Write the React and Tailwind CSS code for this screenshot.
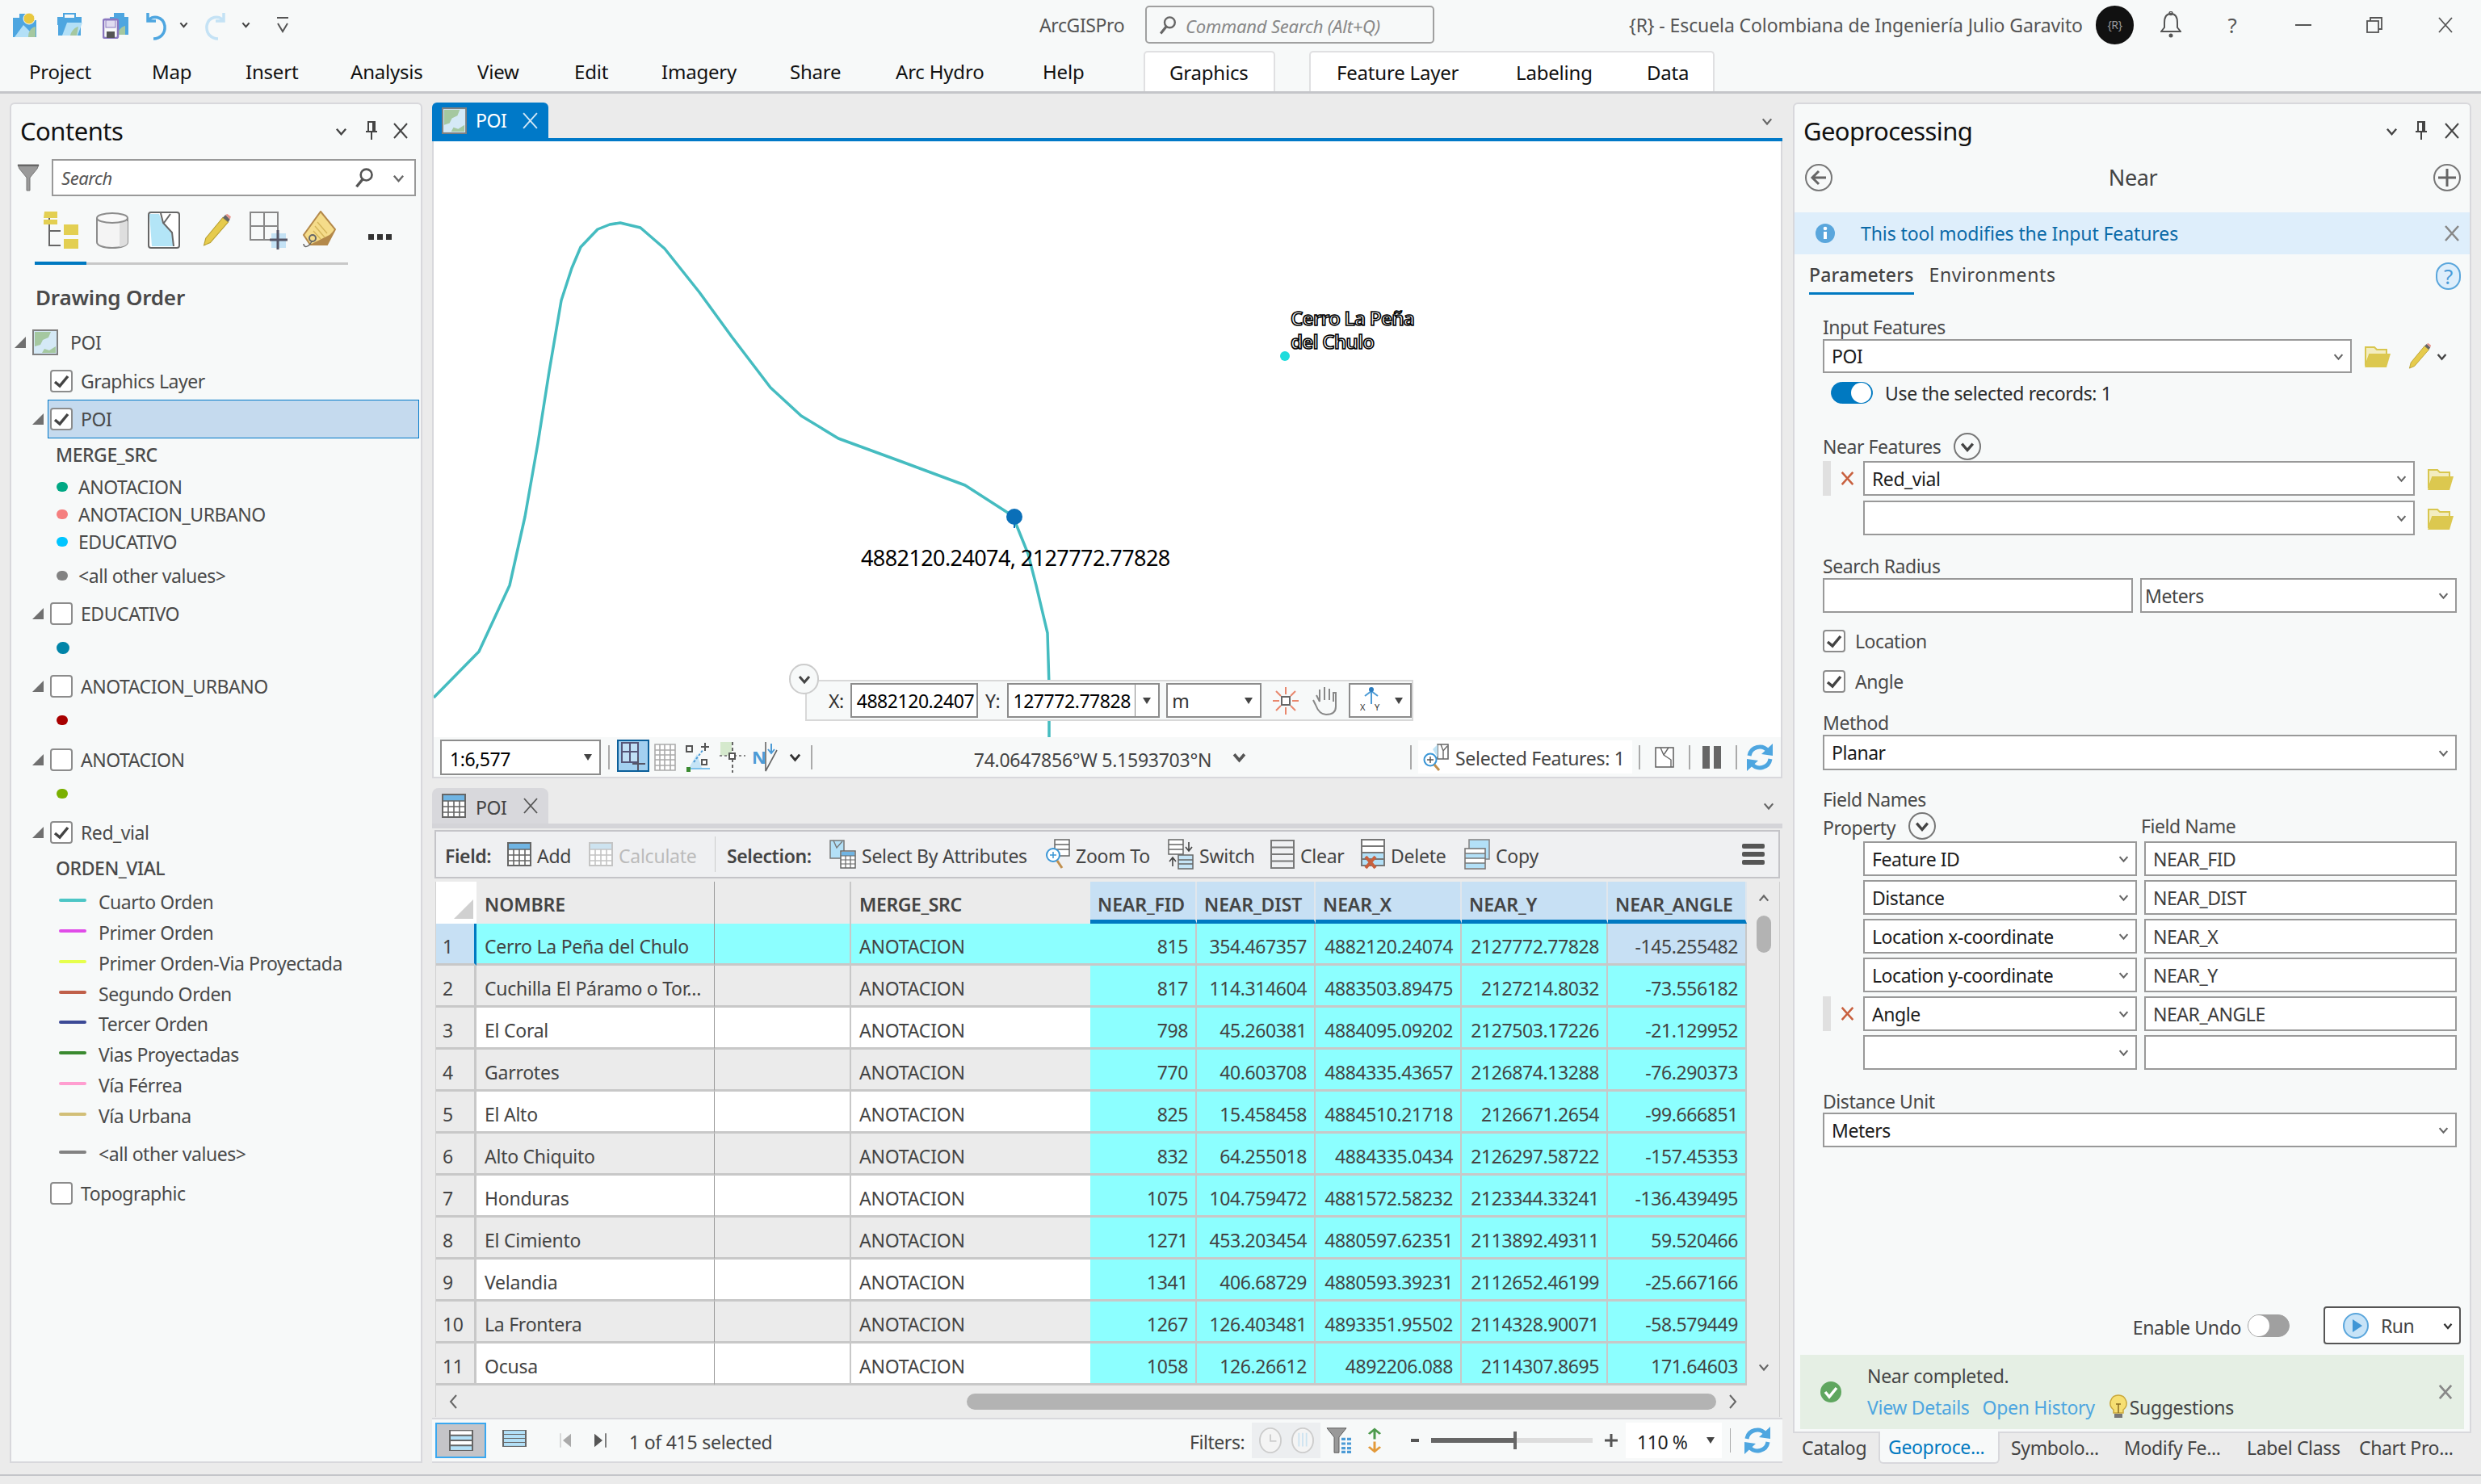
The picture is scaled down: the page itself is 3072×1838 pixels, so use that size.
import React from 'react';

const Chev = ({ s = 16, c = '#555', w = 2.5, up = false }) => (
  <svg width={s} height={s} viewBox="0 0 16 16" className="shrink-0">
    <polyline points={up ? '2,11 8,4 14,11' : '2,5 8,12 14,5'} fill="none" stroke={c} strokeWidth={w} />
  </svg>
);
const Xi = ({ s = 20, c = '#444', w = 2 }) => (
  <svg width={s} height={s} viewBox="0 0 20 20" className="shrink-0">
    <path d="M2 1 L18 19 M18 1 L2 19" stroke={c} strokeWidth={w} fill="none" />
  </svg>
);
const Pin = () => (
  <svg width="16" height="24" viewBox="0 0 16 24" className="shrink-0">
    <path d="M4 1h8v12H4zM1 13h14M8 13v10M10 2v11" stroke="#444" strokeWidth="2" fill="none" />
  </svg>
);
const Drop = ({ c = '#444' }) => (
  <svg width="12" height="10" viewBox="0 0 12 10" className="shrink-0"><polygon points="1,1 11,1 6,9" fill={c} /></svg>
);
const Lens = ({ s = 30, c = '#555' }) => (
  <svg width={s} height={s} viewBox="0 0 30 30" className="shrink-0">
    <circle cx="18" cy="11" r="8" stroke={c} strokeWidth="3" fill="none" />
    <path d="M13 17 L4 28" stroke={c} strokeWidth="4" />
  </svg>
);
const Folder = () => (
  <svg width="34" height="32" viewBox="0 0 34 32" className="shrink-0">
    <path d="M2 5h11l3 3h12v6H7L2 28z" fill="#f3edc0" stroke="#d8c64e" strokeWidth="2" />
    <path d="M7 13h26l-5 17H1z" fill="#dcc84f" />
  </svg>
);
const Pencil = ({ s = 36 }) => (
  <svg width={s} height={s} viewBox="0 0 36 36" className="shrink-0">
    <path d="M7 27 L26 4 L32 9 L12 32 L5 35z" fill="#e6cb4c" stroke="#b79f30" strokeWidth="1" />
    <path d="M26 4 L29 1 L34 6 L32 9z" fill="#666" />
    <path d="M29 1 L31 0 L35 3 L34 6z" fill="#e8958c" />
  </svg>
);
const Tri = () => (
  <svg width="14" height="14" viewBox="0 0 14 14" className="shrink-0"><polygon points="14,0 14,14 0,14" fill="#707070" /></svg>
);
const MapThumb = ({ w = 32, h = 32, b = '#808080' }) => (
  <svg width={w} height={h} viewBox="0 0 32 32" className="shrink-0" preserveAspectRatio="none">
    <rect x="1" y="1" width="30" height="30" fill="#d5e9f6" stroke={b} strokeWidth="2" />
    <path d="M3 3h20l-3 7-7 3-3 6-7 2zM12 29l3-5 6 2 8-5v8z" fill="#a5c8a0" />
  </svg>
);
const Check = ({ on = true }) => (
  <span className="w-[28px] h-[28px] rounded-[4px] border-2 border-[#8c8c8c] bg-white flex items-center justify-center shrink-0">
    {on && (
      <svg width="20" height="18" viewBox="0 0 20 18"><path d="M2 10 L8 15 L18 3" fill="none" stroke="#444" strokeWidth="3.5" /></svg>
    )}
  </span>
);
const Circle = ({ children }) => (
  <span className="rounded-full border-2 border-[#777] flex items-center justify-center shrink-0 w-[34px] h-[34px]">{children}</span>
);
const TableIcon = ({ s = 30, head = '#6fb4e3', c = '#666' }) => (
  <svg width={s} height={s} viewBox="0 0 30 30" className="shrink-0">
    <rect x="1" y="1" width="28" height="28" fill="#fff" stroke={c} strokeWidth="2" />
    <rect x="2" y="2" width="26" height="7" fill={head} />
    <path d="M1 9h28M1 16h28M1 23h28M8 9v20M15 9v20M22 9v20" stroke={c} strokeWidth="1.6" />
  </svg>
);
const Lines = ({ c = '#777', fill = 'none', h = 38 }) => (
  <svg width="30" height={h} viewBox="0 0 30 38" preserveAspectRatio="none" className="shrink-0">
    <rect x="1" y="1" width="28" height="36" fill={fill} stroke={c} strokeWidth="2" />
    <path d="M1 10h28M1 19h28M1 28h28" stroke={c} strokeWidth="2" />
  </svg>
);
const Refresh = () => (
  <svg width="34" height="34" viewBox="0 0 34 34" className="shrink-0">
    <path d="M4 15 A13 13 0 0 1 27 9" fill="none" stroke="#4ea6e0" strokeWidth="5" />
    <polygon points="33,0 33,15 19,13" fill="#4ea6e0" />
    <path d="M30 19 A13 13 0 0 1 7 25" fill="none" stroke="#4ea6e0" strokeWidth="5" />
    <polygon points="1,34 1,19 15,21" fill="#4ea6e0" />
  </svg>
);

const Combo = ({ children, w = 'w-full', h = 'h-[43px]', text = 'text-[#1c1c1c]', pl = 'pl-[9px]', mr = 'pr-[8px]' }) => (
  <div className={`${w} ${h} border-2 border-[#999] bg-white flex items-center justify-between ${pl} ${mr} ${text} shrink-0`}>
    <span className="truncate">{children}</span>
    <Chev s={13} c="#666" w={2.6} />
  </div>
);
const Field = ({ children, w = 'w-full' }) => (
  <div className={`${w} h-[43px] border-2 border-[#999] bg-white flex items-center pl-[9px] text-[#3c3c3c] shrink-0`}>{children}</div>
);
const RedX = () => <Xi s={17} c="#c8603e" w={3} />;

const dotRow = (mt, color, label, size = 'w-[14px] h-[12px]', tl = 'pl-[13px]') => (
  <div className={`${mt} h-[32px] flex items-center pl-[44px] text-[#4a4a4a]`} key={label + color}>
    <span className="w-[26px] flex items-center pl-[12px]"><span className={`${size} rounded-full shrink-0 ${color}`} /></span>
    {label && <span className={tl}>{label}</span>}
  </div>
);
const Layer = ({ mt, on, label }) => (
  <div className={`${mt} h-[32px] flex items-center pl-[26px] text-[#4a4a4a]`}>
    <Tri /><span className="w-[8px]" /><Check on={on} /><span className="pl-[10px]">{label}</span>
  </div>
);
const lineRow = (mt, color, label) => (
  <div className={`${mt} h-[32px] flex items-center pl-[59px] text-[#4a4a4a]`} key={label}>
    <span className={`w-[34px] h-[4px] rounded-full shrink-0 mb-[4px] ${color}`} />
    <span className="pl-[15px]">{label}</span>
  </div>
);

const Contents = () => (
  <div className="w-[511px] h-[1685px] shrink-0 bg-[#f7f9f9] border-2 border-[#d8d8dc] rounded-t-[6px] flex flex-col">
    <div className="h-[44px] mt-[11px] flex items-center pl-[11px] pr-[15px]">
      <span className="text-[31px] text-[#111] tracking-[-0.5px] flex-1">Contents</span>
      <Chev s={15} c="#444" />
      <span className="w-[22px]" />
      <Pin />
      <span className="w-[18px]" />
      <Xi s={20} />
    </div>
    <div className="h-[46px] mt-[13px] flex items-center pl-[7px] pr-[6px]">
      <svg width="28" height="34" viewBox="0 0 28 34" className="shrink-0 mr-[15px]">
        <path d="M1 1h26l-2 5-9 11v16h-4V17L3 6z" fill="#9a9a9a" stroke="#777" strokeWidth="1" />
        <rect x="1" y="1" width="26" height="2" fill="#666" />
      </svg>
      <div className="flex-1 h-[46px] border-2 border-[#999] bg-white flex items-center pl-[10px] pr-[12px]">
        <span className="italic text-[#555] text-[22px] flex-1">Search</span>
        <Lens s={26} />
        <span className="w-[22px]" />
        <Chev s={15} c="#666" />
      </div>
    </div>
    <div className="h-[50px] mt-[17px] flex items-center pl-[39px]">
      <svg width="46" height="46" viewBox="0 0 46 46" className="shrink-0">
        <path d="M8 8v34h14M8 24h14" stroke="#666" strokeWidth="2" fill="none" />
        <path d="M2 0h16v8H1zM1 10h17v6H1z" fill="#e3cf52" />
        <rect x="26" y="16" width="18" height="13" fill="#e3cf52" />
        <rect x="26" y="34" width="18" height="12" fill="#e3cf52" />
      </svg>
      <span className="w-[19px]" />
      <svg width="42" height="46" viewBox="0 0 42 46" className="shrink-0">
        <path d="M2 8v30c0 4 8 7 19 7s19-3 19-7V8" fill="#f4f4f4" stroke="#8c8c8c" strokeWidth="2" />
        <path d="M30 12h10v26c0 3-4 5-10 6z" fill="#dedede" />
        <ellipse cx="21" cy="8" rx="19" ry="6" fill="#f9f9f9" stroke="#8c8c8c" strokeWidth="2" />
      </svg>
      <span className="w-[23px]" />
      <svg width="40" height="46" viewBox="0 0 40 46" className="shrink-0">
        <rect x="1" y="1" width="38" height="44" rx="3" fill="#fff" stroke="#666" strokeWidth="2" />
        <path d="M2 3h12l4 11 11 12 3 17H5z" fill="#b3e5f7" />
        <path d="M16 2l3 12 11 12 2 17M28 3 L20 14" stroke="#666" strokeWidth="2" fill="none" />
      </svg>
      <span className="w-[24px]" />
      <Pencil s={40} />
      <span className="w-[21px]" />
      <svg width="48" height="48" viewBox="0 0 48 48" className="shrink-0">
        <path d="M2 2h34v34H2zM2 19h34M19 2v34" stroke="#888" strokeWidth="2" fill="none" />
        <rect x="28" y="28" width="18" height="18" fill="#c4e2f5" />
        <path d="M36 24v24M26 36h22" stroke="#556" strokeWidth="3" />
      </svg>
      <span className="w-[18px]" />
      <svg width="42" height="48" viewBox="0 0 42 48" className="shrink-0">
        <path d="M23 1 L41 23 L31 42 H10 L2 30z" fill="#f5dc8a" stroke="#b4894a" strokeWidth="2" />
        <path d="M10 42 L31 42 L41 23 L34 30z" fill="#b4894a" />
        <path d="M19 14l12 14M16 19l12 14M14 25l9 10" stroke="#d5b65a" strokeWidth="1.4" />
        <circle cx="13" cy="34" r="4" fill="none" stroke="#666" strokeWidth="2" />
        <path d="M12 38 C8 46 2 46 2 41" fill="none" stroke="#666" strokeWidth="1.5" />
      </svg>
      <span className="w-[40px]" />
      <span className="flex gap-[4px] mt-[16px]"><i className="w-[7px] h-[7px] bg-[#333]" /><i className="w-[7px] h-[7px] bg-[#333]" /><i className="w-[7px] h-[7px] bg-[#333]" /></span>
    </div>
    <div className="ml-[29px] mt-[15px] w-[388px] h-[3px] bg-[#c8c8c8] relative flex">
      <span className="w-[64px] h-[4px] -mt-[1px] bg-[#0079c1]" />
    </div>
    <div className="mt-[20px] h-[40px] pl-[30px] flex items-center text-[26px] font-semibold text-[#4a4a4a] tracking-[-0.2px]">Drawing Order</div>
    <div className="mt-[20px] h-[32px] flex items-center pl-[4px] text-[#4a4a4a]">
      <Tri /><span className="w-[8px]" /><MapThumb /><span className="pl-[15px]">POI</span>
    </div>
    <div className="mt-[16px] h-[32px] flex items-center pl-[48px] text-[#4a4a4a]"><Check /><span className="pl-[10px]">Graphics Layer</span></div>
    <div className="mt-[7px] h-[48px] flex items-center pl-[26px] text-[#4a4a4a]">
      <Tri />
      <div className="ml-[5px] w-[460px] h-[48px] bg-[#c5daee] border border-[#0078c8] flex items-center pl-[2px]">
        <Check /><span className="pl-[10px]">POI</span>
      </div>
    </div>
    <div className="mt-[4px] h-[32px] flex items-center pl-[55px] text-[#4a4a4a] font-medium">MERGE_SRC</div>
    {dotRow('mt-[8px]', 'bg-[#00a884]', 'ANOTACION')}
    {dotRow('mt-[2px]', 'bg-[#f57f7f]', 'ANOTACION_URBANO')}
    {dotRow('mt-[2px]', 'bg-[#00c5ff]', 'EDUCATIVO')}
    {dotRow('mt-[10px]', 'bg-[#828282]', '<all other values>')}
    <Layer mt="mt-[15px]" on={false} label="EDUCATIVO" />
    {dotRow('mt-[10px]', 'bg-[#0084a8]', '', 'w-[16px] h-[15px]')}
    <Layer mt="mt-[16px]" on={false} label="ANOTACION_URBANO" />
    {dotRow('mt-[10px]', 'bg-[#a80000]', '')}
    <Layer mt="mt-[17px]" on={false} label="ANOTACION" />
    {dotRow('mt-[10px]', 'bg-[#7ab000]', '')}
    <Layer mt="mt-[16px]" on={true} label="Red_vial" />
    <div className="mt-[12px] h-[32px] flex items-center pl-[55px] text-[#4a4a4a] font-medium">ORDEN_VIAL</div>
    {lineRow('mt-[10px]', 'bg-[#4cc6c6]', 'Cuarto Orden')}
    {lineRow('mt-[6px]', 'bg-[#e04ce8]', 'Primer Orden')}
    {lineRow('mt-[6px]', 'bg-[#e6ff4c]', 'Primer Orden-Via Proyectada')}
    {lineRow('mt-[6px]', 'bg-[#c0604a]', 'Segundo Orden')}
    {lineRow('mt-[5px]', 'bg-[#3c4a96]', 'Tercer Orden')}
    {lineRow('mt-[6px]', 'bg-[#3a8a30]', 'Vias Proyectadas')}
    {lineRow('mt-[6px]', 'bg-[#ff9ed0]', 'Vía Férrea')}
    {lineRow('mt-[6px]', 'bg-[#d2bf78]', 'Vía Urbana')}
    {lineRow('mt-[15px]', 'bg-[#828282]', '<all other values>')}
    <div className="mt-[17px] h-[32px] flex items-center pl-[48px] text-[#4a4a4a]"><Check on={false} /><span className="pl-[10px]">Topographic</span></div>
  </div>
);

const Map = () => (
  <div className="h-[740px] bg-white border-x-2 border-[#d8d8dc] relative overflow-hidden">
    <svg width="1668" height="740" viewBox="537 175 1668 740" className="absolute left-0 top-0">
      <polyline
        fill="none"
        stroke="#45bcc0"
        strokeWidth="3.5"
        strokeLinejoin="round"
        points="537,864 593,807 631,725 650,640 666,549 680,460 695,372 708,332 719,306 740,284 755,278 768,276 793,282 823,308 866,362 906,417 954,480 992,515 1038,543 1117,572 1195,601 1254,639 1273,686 1283,725 1297,784 1299,850 1299,915"
      />
      <path d="M1256 640 v14" stroke="#0a6fb8" strokeWidth="2" />
      <circle cx="1256" cy="640" r="10" fill="#0a6fb8" />
      <circle cx="1591" cy="441" r="6" fill="#1fdcdc" />
    </svg>
    <div className="absolute left-[1061px] top-[204px] text-[24px] leading-[29px] font-semibold text-white [-webkit-text-stroke:1.6px_#000] tracking-[-0.7px]">
      Cerro La Peña<br />del Chulo
    </div>
    <div className="absolute left-[529px] top-[497px] text-[27px] leading-[38px] text-black tracking-[-0.6px] whitespace-nowrap">4882120.24074, 2127772.77828</div>
    <div className="absolute left-[460px] top-[667px] w-[753px] h-[51px] bg-[#f7f9f9] border-2 border-[#d8d8d8] flex items-center pl-[27px] text-[#222]">
      <span className="w-[27px] text-[#333]">X:</span>
      <div className="w-[160px] h-[43px] border-2 border-[#8c8c8c] bg-white flex items-center pl-[6px] overflow-hidden whitespace-nowrap text-black">4882120.2407</div>
      <span className="w-[37px] text-center text-[#333]">Y:</span>
      <div className="w-[189px] h-[43px] border-2 border-[#8c8c8c] bg-white flex items-center pl-[5px] text-black">
        <span className="w-[153px]">127772.77828</span>
        <span className="h-[39px] w-[30px] border-l border-[#888] flex items-center justify-center"><Drop /></span>
      </div>
      <span className="w-[8px]" />
      <div className="w-[119px] h-[43px] border-2 border-[#8c8c8c] bg-white flex items-center justify-between pl-[5px] pr-[8px] text-[#333]">m<Drop /></div>
      <span className="w-[14px]" />
      <svg width="32" height="34" viewBox="0 0 32 34" className="shrink-0">
        <path d="M16 0v9M16 25v9M0 17h8M24 17h8M4 5l6 6M28 5l-6 6M4 29l6-6M28 29l-6-6" stroke="#e9876d" strokeWidth="2" />
        <rect x="11" y="12" width="10" height="10" fill="#fff" stroke="#666" strokeWidth="2" />
      </svg>
      <span className="w-[16px]" />
      <svg width="36" height="38" viewBox="0 0 36 38" className="shrink-0">
        <path d="M10 20 L6 12 M10 20 V5 M16 18 V2 M22 18 V4 M27 20 V9 L30 9 V26 C30 34 24 36 18 36 C12 36 8 32 5 24 L2 18" fill="none" stroke="#888" strokeWidth="2" />
      </svg>
      <span className="w-[10px]" />
      <div className="w-[79px] h-[43px] border-2 border-[#8c8c8c] bg-white flex items-center justify-between pl-[12px] pr-[8px]">
        <svg width="30" height="36" viewBox="0 0 30 36" className="shrink-0">
          <path d="M14 2v20" stroke="#4c9bd6" strokeWidth="2" />
          <path d="M6 12 L14 6 L22 12" stroke="#4c9bd6" strokeWidth="2" fill="none" />
          <circle cx="14" cy="4" r="3" fill="#2b7cbf" />
          <text x="0" y="30" fontSize="11" fill="#333" fontFamily="Noto Sans">X</text>
          <text x="18" y="30" fontSize="11" fill="#333" fontFamily="Noto Sans">Y</text>
        </svg>
        <Drop />
      </div>
    </div>
    <div className="absolute left-[440px] top-[647px] w-[37px] h-[38px] rounded-full border-2 border-[#ccc] bg-[#f7f9f9] flex items-center justify-center"><Chev s={16} c="#444" w={3} /></div>
  </div>
);

const MapStatus = () => (
  <div className="h-[51px] bg-[#f7f9f9] border-x-2 border-b-2 border-[#d8d8dc] flex items-center pl-[8px] text-[#333] shrink-0">
    <div className="w-[199px] h-[44px] border-2 border-[#8c8c8c] bg-white flex items-center justify-between pl-[10px] pr-[8px] shrink-0 text-black"><span className="pt-[4px]">1:6,577</span><Drop /></div>
    <span className="w-[2px] h-[30px] bg-[#aaa] mx-[9px]" />
    <div className="w-[40px] h-[40px] -mt-[3px] bg-[#a3d0f0] border-2 border-[#0b5f9a] flex items-center justify-center">
      <svg width="32" height="36" viewBox="0 0 32 36"><path d="M2 2h20v24H2zM2 13h20M12 2v24" stroke="#557" strokeWidth="2" fill="#c0dff5" /><path d="M22 20v16M15 28h16" stroke="#556" strokeWidth="2" /></svg>
    </div>
    <span className="w-[6px]" />
    <svg width="27" height="34" viewBox="0 0 27 34" className="shrink-0"><path d="M1 1h25v32H1zM1 8h25M1 14h25M1 20h25M1 27h25M7 1v32M13 1v32M20 1v32" stroke="#aaa" strokeWidth="1.6" fill="#fff" /></svg>
    <span className="w-[12px]" />
    <svg width="32" height="36" viewBox="0 0 32 36" className="shrink-0">
      <rect x="1" y="4" width="7" height="7" fill="none" stroke="#555" strokeWidth="2" />
      <path d="M24 0v10M19 5h10" stroke="#555" strokeWidth="2" />
      <path d="M4 31 L20 31 L14 14z" fill="#c5e4f6" />
      <path d="M10 24 L22 8" stroke="#4c9bd6" strokeWidth="2" strokeDasharray="3 2" />
      <rect x="20" y="21" width="6" height="6" fill="#fff" stroke="#555" strokeWidth="2" />
      <rect x="1" y="30" width="5" height="6" fill="#3a8a30" />
      <path d="M6 32h24" stroke="#7cc1ec" strokeWidth="2" />
    </svg>
    <span className="w-[10px]" />
    <svg width="32" height="38" viewBox="0 0 32 38" className="shrink-0">
      <rect x="1" y="0" width="14" height="17" fill="#d5e9cd" />
      <path d="M16 0v38" stroke="#666" strokeWidth="2" strokeDasharray="4 3" />
      <path d="M0 17h32" stroke="#888" strokeWidth="2" strokeDasharray="3 3" />
      <rect x="12" y="14" width="7" height="7" fill="#fff" stroke="#555" strokeWidth="2" />
    </svg>
    <span className="w-[8px]" />
    <svg width="34" height="38" viewBox="0 0 34 38" className="shrink-0">
      <text x="0" y="27" fontSize="22" fontWeight="700" fill="#4c9bd6" fontFamily="Noto Sans">N</text>
      <path d="M17 0v36L31 10" fill="none" stroke="#666" strokeWidth="1.6" />
      <path d="M24 2 v12 M20 9 l4 5 l4 -5" fill="none" stroke="#4c9bd6" strokeWidth="2" />
    </svg>
    <span className="w-[12px]" />
    <Chev s={15} c="#333" w={3} />
    <span className="w-[12px]" />
    <span className="w-[2px] h-[30px] bg-[#aaa]" />
    <span className="w-[198px]" />
    <span className="text-[#444] w-[298px] text-center whitespace-nowrap tracking-[-0.25px] pt-[6px]">74.0647856°W 5.1593703°N</span>
    <span className="w-[24px]" />
    <Chev s={17} c="#555" w={3.5} />
    <span className="w-[203px]" />
    <span className="w-[2px] h-[30px] bg-[#aaa]" />
    <span className="w-[8px]" />
    <div className="w-[265px] h-[41px] bg-white flex items-center pl-[6px] text-[#444] shrink-0">
      <svg width="32" height="36" viewBox="0 0 32 36" className="shrink-0">
        <path d="M18 2h13v18H18z" fill="#fff" stroke="#666" strokeWidth="1.6" />
        <path d="M12 8 L18 2 V18" fill="#bfe3f5" />
        <path d="M22 2 L25 10 L30 4 M25 10v10" fill="none" stroke="#666" strokeWidth="1.4" />
        <circle cx="9" cy="21" r="7.5" fill="#fff" stroke="#3a96d6" strokeWidth="2" />
        <path d="M9 17v8M5 21h8" stroke="#555" strokeWidth="1.5" />
        <path d="M14 27l6 7" stroke="#c18f4e" strokeWidth="3" />
      </svg>
      <span className="pl-[8px] pt-[3px] whitespace-nowrap tracking-[-0.3px]">Selected Features: 1</span>
    </div>
    <span className="w-[8px]" />
    <span className="w-[2px] h-[30px] bg-[#aaa]" />
    <span className="w-[18px]" />
    <svg width="24" height="26" viewBox="0 0 24 26" className="shrink-0">
      <rect x="1" y="1" width="22" height="24" fill="#fff" stroke="#666" strokeWidth="1.6" />
      <path d="M7 1l4 9 9 6v9M17 1L11 10" stroke="#666" strokeWidth="1.4" fill="none" />
    </svg>
    <span className="w-[18px]" />
    <span className="w-[2px] h-[30px] bg-[#aaa]" />
    <span className="w-[15px]" />
    <span className="w-[9px] h-[28px] bg-[#666]" />
    <span className="w-[5px]" />
    <span className="w-[9px] h-[28px] bg-[#666]" />
    <span className="w-[18px]" />
    <span className="w-[2px] h-[30px] bg-[#aaa]" />
    <span className="w-[11px]" />
    <Refresh />
  </div>
);

const rows = [
  [1, 'Cerro La Peña del Chulo', 815, '354.467357', '4882120.24074', '2127772.77828', '-145.255482'],
  [2, 'Cuchilla El Páramo o Tor...', 817, '114.314604', '4883503.89475', '2127214.8032', '-73.556182'],
  [3, 'El Coral', 798, '45.260381', '4884095.09202', '2127503.17226', '-21.129952'],
  [4, 'Garrotes', 770, '40.603708', '4884335.43657', '2126874.13288', '-76.290373'],
  [5, 'El Alto', 825, '15.458458', '4884510.21718', '2126671.2654', '-99.666851'],
  [6, 'Alto Chiquito', 832, '64.255018', '4884335.0434', '2126297.58722', '-157.45353'],
  [7, 'Honduras', 1075, '104.759472', '4881572.58232', '2123344.33241', '-136.439495'],
  [8, 'El Cimiento', 1271, '453.203454', '4880597.62351', '2113892.49311', '59.520466'],
  [9, 'Velandia', 1341, '406.68729', '4880593.39231', '2112652.46199', '-25.667166'],
  [10, 'La Frontera', 1267, '126.403481', '4893351.95502', '2114328.90071', '-58.579449'],
  [11, 'Ocusa', 1058, '126.26612', '4892206.088', '2114307.8695', '171.64603'],
];

const NearHead = ({ w, children }) => (
  <div className={`${w} h-[52px] bg-[#c7e0f4] border-b-[5px] border-[#0079c1] border-r-2 border-r-[#e0e6ec] flex items-center pl-[9px] pt-[9px] font-semibold text-[#444] tracking-[-0.1px] whitespace-nowrap shrink-0`}>{children}</div>
);
const Num = ({ w, children, bg = 'bg-[#8cffff]' }) => (
  <div className={`${w} h-[52px] ${bg} border-r-2 border-b-[3px] border-[#c8c8c8] flex items-center justify-end pr-[9px] pt-[6px] text-[#444] tracking-[-0.4px] whitespace-nowrap shrink-0`}>{children}</div>
);

const AttrTable = () => (
  <div className="mt-[4px] h-[663px] ml-[4px] mr-[3px] flex bg-[#ebebeb] border-l border-r border-[#d0d0d0]">
    <div className="flex-1 flex flex-col min-w-0">
      <div className="flex h-[52px]">
        <div className="w-[50px] h-[52px] bg-white flex items-end justify-end pr-[4px] pb-[6px] shrink-0">
          <svg width="24" height="24" viewBox="0 0 24 24"><polygon points="24,0 24,24 0,24" fill="#d0d0d0" /></svg>
        </div>
        <div className="w-[295px] bg-[#ebebeb] border-r border-[#999] flex items-center pl-[10px] pt-[4px] font-semibold text-[#444] tracking-[-0.1px]">NOMBRE</div>
        <div className="w-[169px] bg-[#ebebeb] border-r-2 border-[#c8c8c8]" />
        <div className="w-[296px] bg-[#ebebeb] flex items-center pl-[10px] pt-[4px] font-semibold text-[#444] tracking-[-0.4px]">MERGE_SRC</div>
        <NearHead w="w-[132px]">NEAR_FID</NearHead>
        <NearHead w="w-[147px]">NEAR_DIST</NearHead>
        <NearHead w="w-[181px]">NEAR_X</NearHead>
        <NearHead w="w-[181px]">NEAR_Y</NearHead>
        <NearHead w="w-[172px]">NEAR_ANGLE</NearHead>
      </div>
      {rows.map((r, i) => {
        const sel = i === 0;
        const bg = sel ? 'bg-[#8cffff]' : i % 2 ? 'bg-[#ebebeb]' : 'bg-white';
        return (
          <div className="flex h-[52px]" key={r[0]}>
            <div className={`w-[50px] h-[52px] shrink-0 flex items-center pl-[8px] pt-[6px] border-b-[3px] text-[#444] border-r-[3px] ${sel ? 'bg-[#c7e0f4] border-r-[#0079c1] border-b-[#c8c8c8]' : 'bg-[#ebebeb] border-[#c8c8c8]'}`}>{r[0]}</div>
            <div className={`w-[295px] h-[52px] ${bg} border-r border-r-[#999] border-b-[3px] border-b-[#c8c8c8] flex items-center pl-[10px] pt-[6px] text-[#444] whitespace-nowrap overflow-hidden tracking-[-0.25px]`}>{r[1]}</div>
            <div className={`w-[169px] h-[52px] ${bg} border-r-2 border-b-[3px] border-[#c8c8c8]`} />
            <div className={`w-[296px] h-[52px] ${bg} border-b-[3px] border-[#c8c8c8] flex items-center pl-[10px] pt-[6px] text-[#444] tracking-[-0.2px]`}>ANOTACION</div>
            <Num w="w-[132px]">{r[2]}</Num>
            <Num w="w-[147px]">{r[3]}</Num>
            <Num w="w-[181px]">{r[4]}</Num>
            <Num w="w-[181px]">{r[5]}</Num>
            <Num w="w-[172px]" bg={sel ? 'bg-[#c7e0f4]' : 'bg-[#8cffff]'}>{r[6]}</Num>
          </div>
        );
      })}
      <div className="h-[39px] flex items-center pl-[15px] pr-[8px]">
        <svg width="12" height="20" viewBox="0 0 12 20" className="shrink-0"><polyline points="10,2 3,10 10,18" fill="none" stroke="#666" strokeWidth="2" /></svg>
        <span className="w-[630px]" />
        <span className="w-[928px] h-[20px] rounded-full bg-[#b3b3b3]" />
        <span className="w-[15px]" />
        <svg width="12" height="20" viewBox="0 0 12 20" className="shrink-0"><polyline points="2,2 9,10 2,18" fill="none" stroke="#666" strokeWidth="2" /></svg>
      </div>
    </div>
    <div className="w-[38px] flex flex-col items-center pt-[14px] shrink-0">
      <Chev s={14} c="#666" up />
      <span className="mt-[14px] w-[18px] h-[46px] rounded-full bg-[#b3b3b3]" />
      <span className="mt-[506px]"><Chev s={14} c="#666" /></span>
    </div>
  </div>
);

const Tool = ({ icon, label, dis, w }) => (
  <div className={`flex items-center ${w} ${dis ? 'text-[#bbb]' : 'text-[#444]'} shrink-0 whitespace-nowrap`}>
    {icon}<span className="pl-[7px] pt-[3px] tracking-[-0.25px]">{label}</span>
  </div>
);

const TableBar = () => (
  <div className="mt-[2px] mx-[3px] h-[60px] bg-[#eff0f2] border-2 border-[#c4c4c8] flex items-center pl-[11px] text-[#444] shrink-0">
    <span className="font-semibold w-[77px] tracking-[-0.4px] pt-[3px]">Field:</span>
    <Tool w="w-[101px]" label="Add" icon={<TableIcon s={30} />} />
    <Tool w="w-[156px]" dis label="Calculate" icon={<TableIcon s={30} head="#cde3f0" c="#c4c4c4" />} />
    <span className="w-[1px] h-[44px] bg-[#ccc] mr-[14px]" />
    <span className="font-semibold w-[127px] tracking-[-0.4px] pt-[3px]">Selection:</span>
    <Tool w="w-[267px]" label="Select By Attributes" icon={
      <svg width="33" height="36" viewBox="0 0 33 36" className="shrink-0">
        <rect x="1" y="1" width="17" height="22" fill="#b3e0f7" stroke="#777" strokeWidth="1.5" />
        <path d="M5 1l4 9 7-8" fill="none" stroke="#777" strokeWidth="1.4" />
        <rect x="14" y="14" width="18" height="21" fill="#fff" stroke="#666" strokeWidth="1.5" />
        <rect x="15" y="15" width="16" height="5" fill="#6fb4e3" />
        <path d="M14 20h18M14 25h18M14 30h18M20 20v15M26 20v15" stroke="#666" strokeWidth="1.2" />
      </svg>} />
    <Tool w="w-[152px]" label="Zoom To" icon={
      <svg width="31" height="38" viewBox="0 0 31 38" className="shrink-0">
        <rect x="12" y="1" width="18" height="20" fill="#fff" stroke="#666" strokeWidth="1.5" />
        <path d="M12 7h18M12 13h18" stroke="#666" strokeWidth="1.5" />
        <circle cx="10" cy="20" r="8" fill="#fff" stroke="#3a96d6" strokeWidth="2" />
        <path d="M10 16v8M6 20h8" stroke="#3a96d6" strokeWidth="1.5" />
        <path d="M15 27l6 9" stroke="#c18f4e" strokeWidth="3" />
      </svg>} />
    <Tool w="w-[127px]" label="Switch" icon={
      <svg width="32" height="38" viewBox="0 0 32 38" className="shrink-0">
        <rect x="1" y="1" width="18" height="18" fill="#fff" stroke="#666" strokeWidth="1.5" />
        <path d="M1 7h18M1 13h18" stroke="#666" strokeWidth="1.5" />
        <rect x="13" y="20" width="18" height="17" fill="#c5e4f6" stroke="#666" strokeWidth="1.5" />
        <path d="M13 26h18M13 31h18" stroke="#666" strokeWidth="1.5" />
        <path d="M26 4v10M22 10l4 5 4-5M6 34V24M2 28l4-5 4 5" fill="none" stroke="#444" strokeWidth="1.6" />
      </svg>} />
    <Tool w="w-[112px]" label="Clear" icon={<Lines h={36} />} />
    <Tool w="w-[128px]" label="Delete" icon={
      <svg width="30" height="38" viewBox="0 0 30 38" className="shrink-0">
        <rect x="1" y="1" width="28" height="32" fill="#fff" stroke="#777" strokeWidth="2" />
        <rect x="2" y="17" width="26" height="15" fill="#b3e0f7" />
        <path d="M1 9h28M1 17h28M1 25h28" stroke="#777" strokeWidth="2" />
        <path d="M6 22l12 14M18 22L6 36" stroke="#c8603e" strokeWidth="4" />
      </svg>} />
    <Tool w="w-[344px]" label="Copy" icon={
      <svg width="32" height="38" viewBox="0 0 32 38" className="shrink-0">
        <rect x="6" y="1" width="25" height="24" fill="#b3e0f7" stroke="#888" strokeWidth="1.6" />
        <rect x="1" y="12" width="25" height="25" fill="#fff" stroke="#777" strokeWidth="1.6" />
        <rect x="2" y="18" width="23" height="6" fill="#b3e0f7" />
        <rect x="2" y="30" width="23" height="6" fill="#b3e0f7" />
        <path d="M1 18h25M1 24h25M1 30h25" stroke="#777" strokeWidth="1.4" />
      </svg>} />
    <span className="flex flex-col gap-[4px] w-[28px]"><i className="h-[6px] rounded-[2px] bg-[#555]" /><i className="h-[6px] rounded-[2px] bg-[#555]" /><i className="h-[6px] rounded-[2px] bg-[#555]" /></span>
  </div>
);

const TableStatus = () => (
  <div className="h-[56px] mt-[1px] bg-[#f7f9f9] border-b-2 border-t-2 border-[#d8d8dc] flex items-center pl-[4px] text-[#444] shrink-0">
    <div className="w-[63px] h-[44px] bg-[#c4c4c8] border-2 border-[#3aa8f0] flex items-center justify-center shrink-0">
      <svg width="30" height="26" viewBox="0 0 30 38" preserveAspectRatio="none"><rect x="1" y="1" width="28" height="36" fill="#fff" stroke="#666" strokeWidth="2" /><path d="M2 10h26v8H2zM2 27h26v9H2z" fill="#b3e0f7" /><path d="M1 10h28M1 19h28M1 28h28" stroke="#666" strokeWidth="3" /></svg>
    </div>
    <span className="w-[20px]" />
    <span className="-mt-[6px]"><Lines c="#666" fill="#b3e0f7" h={21} /></span>
    <span className="w-[41px]" />
    <svg width="16" height="20" viewBox="0 0 16 34" preserveAspectRatio="none" className="shrink-0"><path d="M14 3v28L4 17z" fill="#aaa" /><path d="M1 2v30" stroke="#ccc" strokeWidth="1.5" /></svg>
    <span className="w-[25px]" />
    <svg width="18" height="20" viewBox="0 0 18 34" preserveAspectRatio="none" className="shrink-0"><path d="M2 3v28l10-14z" fill="#555" /><path d="M16 2v30" stroke="#555" strokeWidth="1.5" /></svg>
    <span className="w-[27px]" />
    <span className="w-[694px] whitespace-nowrap text-[#444] tracking-[-0.25px] pt-[3px]">1 of 415 selected</span>
    <span className="w-[77px] whitespace-nowrap pt-[3px]">Filters:</span>
    <div className="w-[85px] h-[44px] bg-[#eceef0] flex items-center justify-center gap-[12px]">
      <svg width="28" height="32" viewBox="0 0 30 38" preserveAspectRatio="none"><ellipse cx="15" cy="19" rx="14" ry="18" fill="#f4f4f4" stroke="#ccc" strokeWidth="2" /><path d="M15 10v10h8" stroke="#ccc" strokeWidth="2" fill="none" /></svg>
      <svg width="28" height="32" viewBox="0 0 30 38" preserveAspectRatio="none"><ellipse cx="15" cy="19" rx="14" ry="18" fill="#f4f4f4" stroke="#ccc" strokeWidth="2" /><path d="M10 8v20M15 8v20M20 8v20" stroke="#cde3f0" strokeWidth="2" /></svg>
    </div>
    <span className="w-[7px]" />
    <svg width="32" height="32" viewBox="0 0 32 40" preserveAspectRatio="none" className="shrink-0">
      <path d="M1 1h24l-9 14v24h-6V15z" fill="#999" stroke="#555" strokeWidth="1" />
      <path d="M19 18h12M19 25h12M19 32h12M19 38h12" stroke="#4c9bd6" strokeWidth="4" strokeDasharray="5 2" />
    </svg>
    <span className="w-[18px]" />
    <svg width="20" height="32" viewBox="0 0 20 44" preserveAspectRatio="none" className="shrink-0">
      <path d="M10 20V4M3 11l7-8 7 8" fill="none" stroke="#4d9a4d" strokeWidth="3" />
      <path d="M10 24v16M3 33l7 8 7-8" fill="none" stroke="#e39a3a" strokeWidth="3" />
    </svg>
    <span className="w-[35px]" />
    <span className="w-[10px] h-[4px] bg-[#555]" />
    <span className="w-[15px]" />
    <div className="w-[200px] h-[24px] flex items-center">
      <span className="w-[102px] h-[6px] bg-[#666]" />
      <span className="w-[4px] h-[22px] bg-[#666]" />
      <span className="flex-1 h-[6px] bg-[#ddd]" />
    </div>
    <span className="w-[15px]" />
    <svg width="16" height="16" viewBox="0 0 16 16" className="shrink-0"><path d="M8 0v16M0 8h16" stroke="#555" strokeWidth="3" /></svg>
    <span className="w-[10px]" />
    <div className="w-[119px] h-[44px] bg-white flex items-center justify-between pl-[14px] pr-[8px] text-[#222]"><span className="pt-[3px]">110 %</span><Drop /></div>
    <span className="w-[10px]" />
    <span className="w-[1px] h-[30px] bg-[#aaa]" />
    <span className="w-[16px]" />
    <Refresh />
  </div>
);

const Center = () => (
  <div className="w-[1672px] h-[1685px] shrink-0 flex flex-col">
    <div className="h-[44px] flex items-end shrink-0 justify-between pr-[12px]">
      <div className="w-[144px] h-[44px] bg-[#0079c8] rounded-t-[6px] flex items-center pl-[12px] text-white">
        <MapThumb w={31} h={33} />
        <span className="pl-[11px]">POI</span>
        <span className="pl-[19px]"><Xi s={21} c="#cfe6f5" w={1.8} /></span>
      </div>
      <span className="mb-[14px]"><Chev s={14} c="#666" /></span>
    </div>
    <div className="h-[4px] bg-[#0079c8] shrink-0" />
    <Map />
    <MapStatus />
    <div className="mt-[12px] h-[44px] flex items-center justify-between pr-[10px] shrink-0">
      <div className="w-[144px] h-[44px] bg-[#d8d8dc] rounded-t-[8px] flex items-center pl-[12px] text-[#444]">
        <TableIcon s={30} head="#6fb4e3" c="#666" />
        <span className="pl-[12px] pt-[3px]">POI</span>
        <span className="pl-[20px]"><Xi s={20} c="#555" w={1.8} /></span>
      </div>
      <Chev s={14} c="#666" />
    </div>
    <div className="h-[6px] bg-[#d4d4d8] shrink-0" />
    <TableBar />
    <AttrTable />
    <TableStatus />
  </div>
);

const Label = ({ h = 'h-[30px]', mt = '', children, cl = '' }) => (
  <div className={`${h} ${mt} ${cl} flex items-center text-[#4a4a4a] shrink-0`}>{children}</div>
);

const Geo = () => (
  <div className="w-[840px] h-[1685px] shrink-0 flex flex-col">
    <div className="h-[1648px] bg-[#f7f9f9] border-2 border-[#d8d8dc] rounded-t-[6px] flex flex-col shrink-0">
      <div className="h-[44px] mt-[11px] flex items-center pl-[11px] pr-[12px] shrink-0">
        <span className="text-[31px] text-[#111] flex-1 tracking-[-0.6px]">Geoprocessing</span>
        <Chev s={15} c="#444" />
        <span className="w-[21px]" />
        <Pin />
        <span className="w-[20px]" />
        <Xi s={20} />
      </div>
      <div className="h-[40px] mt-[16px] flex items-center justify-between pl-[13px] pr-[11px] shrink-0 text-[#444]">
        <Circle>
          <svg width="22" height="20" viewBox="0 0 22 20"><path d="M20 10H4M11 2l-8 8 8 8" fill="none" stroke="#666" strokeWidth="3" /></svg>
        </Circle>
        <span className="text-[27px] tracking-[-0.4px]">Near</span>
        <Circle>
          <svg width="24" height="24" viewBox="0 0 24 24"><path d="M12 1v22M1 12h22" stroke="#666" strokeWidth="3" /></svg>
        </Circle>
      </div>
      <div className="h-[52px] mt-[23px] bg-[#deeefb] flex items-center pl-[26px] pr-[12px] shrink-0 text-[#0b6aa8]">
        <svg width="24" height="24" viewBox="0 0 24 24" className="shrink-0"><circle cx="12" cy="12" r="12" fill="#5aa6dc" /><path d="M12 10v9" stroke="#fff" strokeWidth="4" /><circle cx="12" cy="6" r="2.3" fill="#fff" /></svg>
        <span className="pl-[32px] flex-1 tracking-[-0.1px]">This tool modifies the Input Features</span>
        <Xi s={20} c="#888" w={2.5} />
      </div>
      <div className="h-[40px] mt-[10px] flex items-start pl-[18px] pr-[11px] shrink-0 text-[#444]">
        <span className="h-[40px] border-b-[3px] border-[#0079c1] font-medium tracking-[0.2px]">Parameters</span>
        <span className="pl-[19px] flex-1 tracking-[0.6px]">Environments</span>
        <span className="w-[31px] h-[34px] rounded-full border-2 border-[#5aa6dc] bg-[#deeefb] text-[#4a9bd8] flex items-center justify-center text-[26px]">?</span>
      </div>
      <div className="flex flex-col pl-[35px] pr-[16px] flex-1 min-h-0">
        <Label mt="mt-[25px]">Input Features</Label>
        <div className="flex items-center h-[42px] shrink-0">
          <Combo w="w-[655px]" h="h-[42px]">POI</Combo>
          <span className="w-[15px]" />
          <Folder />
          <span className="w-[18px]" />
          <Pencil s={32} />
          <span className="w-[6px]" />
          <Chev s={13} c="#444" w={3} />
        </div>
        <div className="h-[27px] mt-[11px] flex items-center pl-[10px] text-[#2c2c2c] shrink-0">
          <span className="w-[52px] h-[27px] rounded-full bg-[#0079c1] flex items-center justify-end pr-[1px] border border-[#0079c1]"><i className="w-[25px] h-[25px] rounded-full bg-white" /></span>
          <span className="pl-[15px] tracking-[-0.35px]">Use the selected records: 1</span>
        </div>
        <Label h="h-[36px]" mt="mt-[35px]">Near Features<span className="w-[16px]" /><Circle><Chev s={18} c="#444" w={3} /></Circle></Label>
        <div className="flex items-center h-[43px] shrink-0">
          <span className="w-[10px] h-[43px] bg-[#e0e0e0]" />
          <span className="w-[40px] flex justify-center"><RedX /></span>
          <Combo w="w-[683px]">Red_vial</Combo>
          <span className="w-[15px]" />
          <Folder />
        </div>
        <div className="flex items-center h-[43px] mt-[6px] shrink-0">
          <span className="w-[50px]" />
          <Combo w="w-[683px]" />
          <span className="w-[15px]" />
          <Folder />
        </div>
        <Label h="h-[31px]" mt="mt-[22px]">Search Radius</Label>
        <div className="flex gap-[9px] h-[43px] shrink-0">
          <Field w="w-[384px]" />
          <Combo w="w-[392px]" text="text-[#444]" pl="pl-[4px]">Meters</Combo>
        </div>
        <Label mt="mt-[20px]"><Check /><span className="pl-[12px]">Location</span></Label>
        <Label mt="mt-[20px]"><Check /><span className="pl-[12px]">Angle</span></Label>
        <Label mt="mt-[21px]">Method</Label>
        <Combo h="h-[44px]">Planar</Combo>
        <Label mt="mt-[21px]">Field Names</Label>
        <div className="h-[35px] mt-[2px] flex items-center text-[#4a4a4a] shrink-0">
          <span className="w-[394px] flex items-center">Property<span className="w-[16px]" /><span className="-mt-[3px]"><Circle><Chev s={18} c="#444" w={3} /></Circle></span></span>
          <span className="pb-[4px]">Field Name</span>
        </div>
        {[
          ['Feature ID', 'NEAR_FID', ''],
          ['Distance', 'NEAR_DIST', 'mt-[5px]'],
          ['Location x-coordinate', 'NEAR_X', 'mt-[5px]'],
          ['Location y-coordinate', 'NEAR_Y', 'mt-[5px]'],
          ['Angle', 'NEAR_ANGLE', 'mt-[5px]', true],
          ['', '', 'mt-[5px]'],
        ].map(([a, b, m, x]) => (
          <div className={`flex h-[43px] shrink-0 ${m}`} key={a + 'r'}>
            {x ? (
              <>
                <span className="w-[10px] h-[43px] bg-[#e0e0e0]" />
                <span className="w-[40px] flex justify-center items-center"><RedX /></span>
              </>
            ) : (
              <span className="w-[50px]" />
            )}
            <Combo w="w-[339px]">{a}</Combo>
            <span className="w-[9px]" />
            <Field w="w-[387px]">{b}</Field>
          </div>
        ))}
        <Label h="h-[29px]" mt="mt-[24px]">Distance Unit</Label>
        <Combo h="h-[43px]">Meters</Combo>
        <div className="mt-auto mb-[13px] -mr-[5px] h-[47px] flex items-center justify-end text-[#444] shrink-0">
          <span className="text-[23px] pt-[4px] tracking-[-0.35px]">Enable Undo</span>
          <span className="w-[8px]" />
          <span className="w-[52px] h-[28px] rounded-full bg-[#a0a0a0] border border-[#a0a0a0] flex items-center"><i className="w-[26px] h-[26px] rounded-full bg-white" /></span>
          <span className="w-[42px]" />
          <div className="w-[170px] h-[47px] rounded-[4px] border-2 border-[#555] bg-white flex items-center pl-[22px] pr-[8px] shrink-0">
            <svg width="32" height="32" viewBox="0 0 32 32" className="shrink-0"><circle cx="16" cy="16" r="15" fill="#c7e3f7" stroke="#5aa6dc" strokeWidth="2" /><polygon points="12,8 24,16 12,24" fill="#3f96d6" /></svg>
            <span className="pl-[15px] flex-1">Run</span>
            <Chev s={12} c="#333" w={3} />
          </div>
        </div>
      </div>
      <div className="mx-[7px] mb-[3px] h-[92px] bg-[#e5efe4] flex items-center pl-[25px] pr-[14px] shrink-0 text-[#444]">
        <svg width="26" height="26" viewBox="0 0 26 26" className="shrink-0"><circle cx="13" cy="13" r="13" fill="#5fa65f" /><path d="M6 13l5 6 9-11" fill="none" stroke="#fff" strokeWidth="3.5" /></svg>
        <div className="pl-[32px] flex-1 flex flex-col gap-[8px] text-[23px] tracking-[-0.3px]">
          <span className="leading-[30px]">Near completed.</span>
          <div className="flex items-center leading-[30px]">
            <span className="text-[#4ea6e0]">View Details</span>
            <span className="pl-[16px] text-[#4ea6e0]">Open History</span>
            <span className="pl-[18px]">
              <svg width="22" height="32" viewBox="0 0 22 32"><path d="M11 1a10 10 0 0 1 6 18v4H5v-4A10 10 0 0 1 11 1z" fill="#f6df72" stroke="#caa83a" strokeWidth="1.5" /><path d="M8 12h6M11 12v11" stroke="#8a6d22" strokeWidth="1.5" /><path d="M6 24h10v5H6z" fill="#777" /></svg>
            </span>
            <span className="pl-[3px]">Suggestions</span>
          </div>
        </div>
        <Xi s={18} c="#888" w={3} />
      </div>
    </div>
    <div className="h-[39px] -mt-[2px] flex items-center text-[#444] text-[23px] tracking-[-0.35px] shrink-0">
      <span className="w-[106px] pl-[11px]">Catalog</span>
      <span className="w-[150px] h-[40px] bg-[#f7f9f9] border-x-2 border-b-2 border-[#d8d8dc] rounded-b-[6px] flex items-center pl-[10px] text-[#0079c1] whitespace-nowrap">Geoproce...</span>
      <span className="w-[154px] pl-[14px] whitespace-nowrap">Symbolo...</span>
      <span className="w-[152px] whitespace-nowrap">Modify Fe...</span>
      <span className="w-[139px] whitespace-nowrap">Label Class</span>
      <span className="whitespace-nowrap">Chart Pro...</span>
    </div>
  </div>
);

const Ribbon = () => (
  <div className="h-[116px] bg-[#f7f9f9] border-b-[3px] border-[#c4c5c9] flex flex-col shrink-0">
    <div className="h-[63px] flex items-start relative shrink-0">
      <div className="w-[1287px] h-[63px] flex items-center pl-[15px] pb-[2px] shrink-0">
        <svg width="31" height="32" viewBox="0 0 31 32" className="shrink-0"><path d="M1 7h8V2h13v8h8v21H1z" fill="#4ea6e0" /><path d="M3 31 L14 16 L29 31z" fill="#b3e0f7" /><path d="M20 31c0-8 4-12 9-13v13z" fill="#a5c8a0" /><circle cx="21" cy="8" r="7" fill="#e8c840" stroke="#f7f9f9" strokeWidth="1" /></svg>
        <span className="w-[25px]" />
        <svg width="32" height="32" viewBox="0 0 32 32" className="shrink-0"><path d="M1 7h7V2h14v5h7v8H1z" fill="none" stroke="#4ea6e0" strokeWidth="2" /><path d="M1 7h28v22H1z" fill="#4ea6e0" /><path d="M6 29l6-16h19l-6 16z" fill="#b3e0f7" /><path d="M16 29c1-6 6-10 10-11l-2 11z" fill="#a5c8a0" /></svg>
        <span className="w-[24px]" />
        <svg width="33" height="34" viewBox="0 0 33 34" className="shrink-0"><path d="M9 7h5V2h13v5h5v22H9z" fill="#4ea6e0" /><path d="M18 29c1-6 6-10 10-11v11z" fill="#a5c8a0" /><rect x="1" y="10" width="18" height="23" rx="2" fill="#f7f9f9" stroke="#8a78c0" strokeWidth="2.5" /><rect x="4" y="11" width="12" height="9" fill="#e0dcf0" stroke="#8a78c0" strokeWidth="1" /><rect x="5" y="25" width="10" height="8" fill="#555" /></svg>
        <span className="w-[20px]" />
        <svg width="28" height="38" viewBox="0 0 28 38" className="shrink-0"><path d="M3 4v10h10M3 14 C8 6 22 8 24 20 C25 30 18 36 10 36" fill="none" stroke="#4ea6e0" strokeWidth="3.5" /></svg>
        <span className="w-[14px]" />
        <Chev s={11} c="#444" w={3} />
        <span className="w-[19px]" />
        <svg width="28" height="38" viewBox="0 0 28 38" className="shrink-0"><path d="M25 4v10H15M25 14 C20 6 6 8 4 20 C3 30 10 36 18 36" fill="none" stroke="#c4e2f5" strokeWidth="3.5" /></svg>
        <span className="w-[19px]" />
        <Chev s={11} c="#444" w={3} />
        <span className="w-[32px]" />
        <svg width="16" height="22" viewBox="0 0 16 22" className="shrink-0"><path d="M1 2h14M2 9l6 10 6-10" fill="none" stroke="#555" strokeWidth="2" /></svg>
      </div>
      <div className="w-[131px] h-[63px] flex items-center text-[#555] pb-[2px] shrink-0 tracking-[-0.4px]">ArcGISPro</div>
      <div className="mt-[7px] w-[358px] h-[47px] border-2 border-[#a0a0a0] rounded-[5px] flex items-center pl-[14px] shrink-0">
        <Lens s={24} c="#666" />
        <span className="pl-[10px] pt-[2px] italic text-[#888] text-[22px] whitespace-nowrap tracking-[-0.2px]">Command Search (Alt+Q)</span>
      </div>
      <div className="w-[241px] shrink-0" />
      <div className="w-[578px] h-[63px] flex items-center text-[#555] pb-[2px] whitespace-nowrap text-[23px] tracking-[-0.1px] shrink-0">{'{R} - Escuela Colombiana de Ingeniería Julio Garavito'}</div>
      <div className="mt-[7px] w-[47px] h-[48px] rounded-full bg-[#111] flex items-center justify-center text-[#999] text-[14px] shrink-0">{'{R}'}</div>
      <div className="flex items-center h-[63px] pb-[2px]">
        <span className="w-[33px]" />
        <svg width="26" height="34" viewBox="0 0 26 34" className="shrink-0"><path d="M13 3c6 0 8 5 8 11v6l4 5H1l4-5v-6c0-6 2-11 8-11z" fill="none" stroke="#555" strokeWidth="2" /><circle cx="13" cy="2.5" r="2" fill="none" stroke="#555" strokeWidth="1.5" /><circle cx="13" cy="30" r="2.5" fill="#555" /></svg>
        <span className="w-[110px] text-center text-[#555] pl-[16px] text-[26px]">?</span>
        <span className="w-[31px]" />
        <span className="w-[20px] h-[2px] bg-[#555]" />
        <span className="w-[68px]" />
        <svg width="20" height="20" viewBox="0 0 20 20" className="shrink-0"><path d="M5 5V1h14v14h-4" fill="none" stroke="#555" strokeWidth="1.8" /><rect x="1" y="5" width="14" height="14" fill="none" stroke="#555" strokeWidth="1.8" /></svg>
        <span className="w-[68px]" />
        <Xi s={20} c="#555" w={1.8} />
      </div>
    </div>
    <div className="h-[50px] flex items-start text-[#111] text-[24px] tracking-[-0.2px] shrink-0">
      {[
        ['w-[188px] pl-[36px]', 'Project'],
        ['w-[116px]', 'Map'],
        ['w-[130px]', 'Insert'],
        ['w-[157px]', 'Analysis'],
        ['w-[120px]', 'View'],
        ['w-[108px]', 'Edit'],
        ['w-[159px]', 'Imagery'],
        ['w-[131px]', 'Share'],
        ['w-[182px]', 'Arc Hydro'],
        ['w-[125px]', 'Help'],
      ].map(([w, t]) => (
        <span className={`${w} h-[50px] flex items-center pt-[2px] shrink-0 whitespace-nowrap`} key={t}>{t}</span>
      ))}
      <span className="w-[163px] h-[50px] bg-white border-x-2 border-t-2 border-[#e0e0e2] rounded-t-[5px] flex items-center pl-[30px] pt-[2px] shrink-0">Graphics</span>
      <span className="w-[42px] shrink-0" />
      <div className="w-[502px] h-[50px] bg-white border-x-2 border-t-2 border-[#e0e0e2] rounded-t-[5px] flex items-center pl-[32px] pt-[2px] shrink-0">
        <span className="w-[222px]">Feature Layer</span>
        <span className="w-[162px]">Labeling</span>
        <span>Data</span>
      </div>
    </div>
  </div>
);

export default function App() {
  return (
    <div className="w-[3072px] h-[1838px] bg-[#ebebeb] overflow-hidden flex flex-col font-['Noto_Sans','Open_Sans',sans-serif] text-[23px] tracking-[-0.45px] leading-[30px]">
      <Ribbon />
      <div className="flex pl-[12px] pt-[11px] h-[1710px] shrink-0">
        <Contents />
        <span className="w-[12px] shrink-0" />
        <Center />
        <span className="w-[13px] shrink-0" />
        <Geo />
      </div>
      <div className="h-[2px] bg-[#c4c5c9] shrink-0" />
    </div>
  );
}
